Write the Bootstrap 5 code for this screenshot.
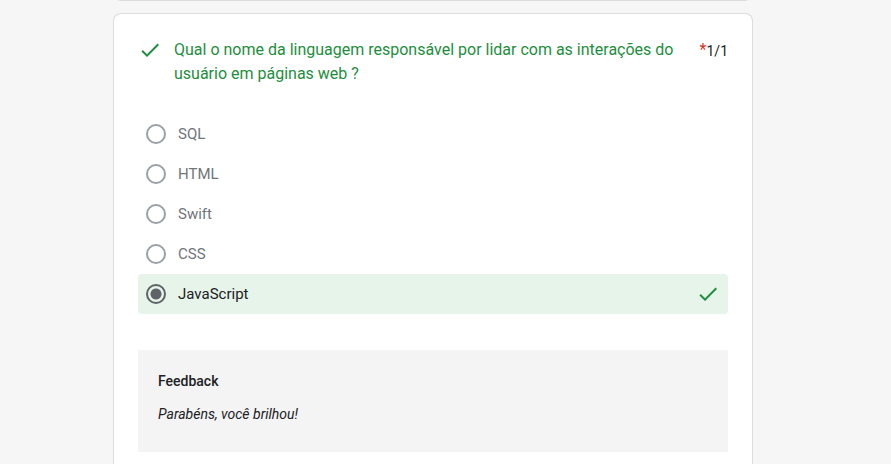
<!DOCTYPE html>
<html lang="pt-BR">
<head>
<meta charset="utf-8">
<meta name="viewport" content="width=device-width, initial-scale=1">
<title>Formulário</title>
<link href="https://cdn.jsdelivr.net/npm/bootstrap@5.3.0/dist/css/bootstrap.min.css" rel="stylesheet">
<style>
body { background: #f6f6f6; font-family: Roboto, Arial, sans-serif; font-size: 14px; line-height: 20px; color: #202124; padding-right: 25px; }
.form-column { max-width: 640px; gap: 12px; }
.question-card { border: 1px solid #dadce0; border-radius: 8px; background: #fff; }
.previous-card { height: 16px; margin-top: -15px; }
.current-card { padding: 24px 24px 12px; border-bottom: 0; border-bottom-left-radius: 0; border-bottom-right-radius: 0; }
.check-icon { width: 24px; height: 24px; fill: #1e8e3e; }
.question-title { font-size: 16px; line-height: 24px; color: #1e8e3e; }
.required-mark { font-size: 16px; line-height: 24px; color: #d93025; }
.points { font-size: 14px; line-height: 26px; }
.choice { min-height: 40px; border-radius: 4px; font-size: 15px; color: #70757a; }
.choice-correct { background: #e6f4ea; color: #202124; }
.choice-list { margin: 28px 0 36px; }
.choice .form-check-input { width: 20px; height: 20px; border: 2px solid #9aa0a6; background: none; opacity: 1; }
.choice .form-check-input:checked { border-color: #5f6368; background: radial-gradient(circle, #5f6368 5px, transparent 6px); }
.choice .form-check-label { opacity: 1; }
.feedback { background: #f4f4f4; padding: 21px 20px 28px; }
.feedback-title { font-size: 14px; line-height: 20px; font-weight: 500; }
.feedback-text { margin: 13px 0 0; }
</style>
<script src="https://cdn.jsdelivr.net/npm/bootstrap@5.3.0/dist/js/bootstrap.bundle.min.js" defer></script>
</head>
<body class="overflow-hidden">
<main class="form-column mx-auto vh-100 d-flex flex-column">
  <div class="question-card previous-card flex-shrink-0"></div>
  <form class="question-card current-card flex-grow-1 flex-shrink-0">
    <div class="d-flex align-items-start">
      <svg class="check-icon flex-shrink-0" viewBox="0 0 24 24" role="img" aria-label="Correto"><path d="M9 16.17L4.83 12l-1.42 1.41L9 19 21 7l-1.41-1.41z"/></svg>
      <h1 class="question-title fw-normal mb-0 ms-2 ps-1 flex-grow-1" id="question">Qual o nome da linguagem responsável por lidar com as interações do usuário em páginas web ?</h1>
      <div class="d-flex flex-shrink-0 ms-3"><span class="required-mark">*</span><span class="points">1/1</span></div>
    </div>
    <div class="choice-list" role="radiogroup" aria-labelledby="question">
      <div class="choice d-flex align-items-center px-2"><input class="form-check-input m-0" type="radio" name="answer" id="sql"><label class="form-check-label ps-2 ms-1" for="sql">SQL</label></div>
      <div class="choice d-flex align-items-center px-2"><input class="form-check-input m-0" type="radio" name="answer" id="html"><label class="form-check-label ps-2 ms-1" for="html">HTML</label></div>
      <div class="choice d-flex align-items-center px-2"><input class="form-check-input m-0" type="radio" name="answer" id="swift"><label class="form-check-label ps-2 ms-1" for="swift">Swift</label></div>
      <div class="choice d-flex align-items-center px-2"><input class="form-check-input m-0" type="radio" name="answer" id="css"><label class="form-check-label ps-2 ms-1" for="css">CSS</label></div>
      <div class="choice choice-correct d-flex align-items-center px-2"><input class="form-check-input m-0" type="radio" name="answer" id="javascript" checked><label class="form-check-label ps-2 ms-1 me-auto" for="javascript">JavaScript</label><svg class="check-icon" viewBox="0 0 24 24" role="img" aria-label="Correto"><path d="M9 16.17L4.83 12l-1.42 1.41L9 19 21 7l-1.41-1.41z"/></svg></div>
    </div>
    <section class="feedback">
      <h2 class="feedback-title mb-0">Feedback</h2>
      <p class="feedback-text fst-italic">Parabéns, você brilhou!</p>
    </section>
  </form>
</main>
</body>
</html>
